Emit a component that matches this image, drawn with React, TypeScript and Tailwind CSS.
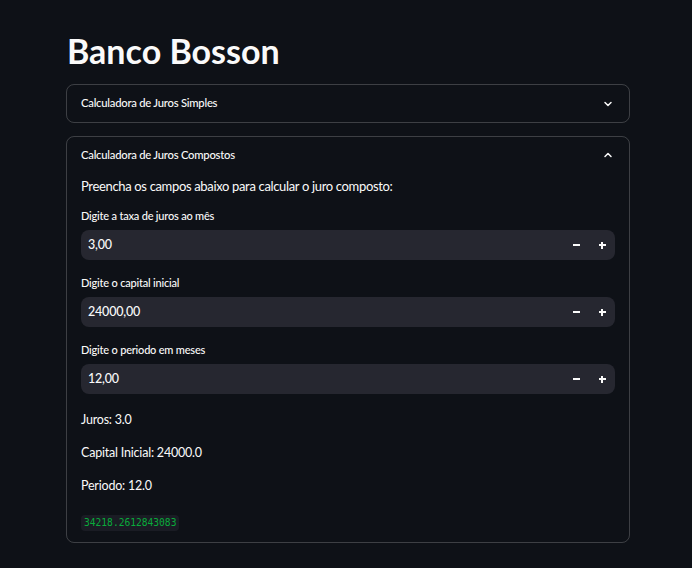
import React from "react";

const font = { fontFamily: "Lato, 'Noto Sans', sans-serif" };

function Chevron({ up }: { up?: boolean }) {
  return (
    <svg width="12" height="12" viewBox="0 0 24 24" fill="none" stroke="#fafafa" strokeWidth="3" strokeLinecap="round" strokeLinejoin="round">
      {up ? <path d="M6 15l6-6 6 6" /> : <path d="M6 9l6 6 6-6" />}
    </svg>
  );
}

function NumberInput({ label, value }: { label: string; value: string }) {
  return (
    <div className="flex flex-col">
      <div className="text-[11px] tracking-[-0.2px] leading-[20px] font-medium text-[#fafafa] mb-[4px]">{label}</div>
      <div className="flex items-center h-[30px] rounded-[8px] bg-[#262730]">
        <div className="flex-1 pl-[7px] text-[12.5px] tracking-[-0.2px] font-medium text-[#fafafa]">{value}</div>
        <div className="w-[26px] flex justify-center items-center">
          <div className="w-[7px] h-[2px] bg-[#fafafa]" />
        </div>
        <div className="w-[26px] flex justify-center items-center relative">
          <div className="w-[7px] h-[2px] bg-[#fafafa]" />
          <div className="absolute w-[2px] h-[7px] bg-[#fafafa]" />
        </div>
      </div>
    </div>
  );
}

export default function App() {
  return (
    <div className="min-h-[568px] bg-[#0e1117] text-[#fafafa]" style={font}>
      <div className="w-[564px] ml-[66px] pt-[28px]">
        <h1 className="text-[34px] font-bold leading-[46px] pl-[1px] mb-[10px]">Banco Bosson</h1>
        <div className="h-[39px] border border-[rgba(250,250,250,0.2)] rounded-[8px] flex items-center justify-between pl-[14px] pr-[15px]">
          <span className="text-[11.25px] tracking-[-0.23px] font-medium">Calculadora de Juros Simples</span>
          <Chevron />
        </div>
        <div className="mt-[13px] border border-[rgba(250,250,250,0.2)] rounded-[8px] px-[14px] pb-[10px]">
          <div className="h-[36px] flex items-center justify-between pr-[1px]">
            <span className="text-[11.25px] tracking-[-0.23px] font-medium">Calculadora de Juros Compostos</span>
            <Chevron up />
          </div>
          <p className="text-[13px] tracking-[-0.34px] leading-[24px] mt-[1px] mb-[8px]">Preencha os campos abaixo para calcular o juro composto:</p>
          <div className="flex flex-col gap-[13px]">
            <NumberInput label="Digite a taxa de juros ao mês" value="3,00" />
            <NumberInput label="Digite o capital inicial" value="24000,00" />
            <NumberInput label="Digite o periodo em meses" value="12,00" />
          </div>
          <div className="mt-[14px] flex flex-col gap-[9px] text-[12.5px] tracking-[-0.2px] leading-[24px]">
            <p>Juros: 3.0</p>
            <p>Capital Inicial: 24000.0</p>
            <p>Periodo: 12.0</p>
          </div>
          <div className="mt-[10px]">
            <code className="inline-block rounded-[4px] bg-[#1a1c24] px-[3px] py-[1px] text-[9.6px] leading-[14px] text-[#09ab3b]" style={{ fontFamily: "'DejaVu Sans Mono', monospace" }}>34218.2612843083</code>
          </div>
        </div>
      </div>
    </div>
  );
}
